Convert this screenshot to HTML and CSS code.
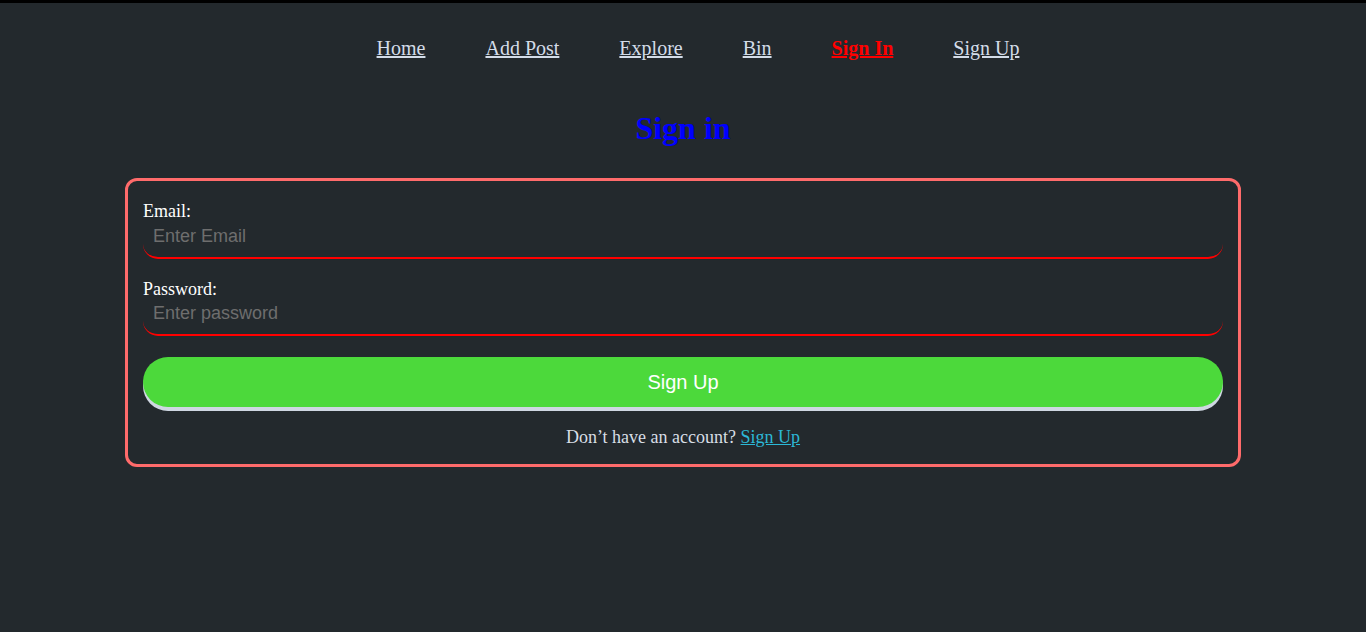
FILE: index.html
```html
<!DOCTYPE html>
<html lang="en">
<head>
<meta charset="utf-8">
<title>Sign in</title>
<link rel="stylesheet" href="styles.css">
</head>
<body>
<div class="topbar"></div>
<nav class="nav">
  <a href="#" class="nav-link">Home</a>
  <a href="#" class="nav-link">Add Post</a>
  <a href="#" class="nav-link">Explore</a>
  <a href="#" class="nav-link">Bin</a>
  <a href="#" class="nav-link active">Sign In</a>
  <a href="#" class="nav-link">Sign Up</a>
</nav>
<h1 class="title">Sign in</h1>
<form class="card">
  <label class="label" for="email">Email:</label>
  <input class="field" id="email" type="email" placeholder="Enter Email">
  <label class="label" for="password">Password:</label>
  <input class="field" id="password" type="password" placeholder="Enter password">
  <button type="button" class="btn">Sign Up</button>
  <p class="footer">Don’t have an account? <a href="#" class="footer-link">Sign Up</a></p>
</form>
</body>
</html>
```
FILE: styles.css
```css
* { box-sizing: border-box; }
html, body {
  margin: 0;
  padding: 0;
  background: #23292d;
  font-family: "Liberation Serif", "Times New Roman", serif;
  min-height: 632px;
}
.topbar {
  height: 3px;
  background: #000;
}
.nav {
  display: flex;
  justify-content: center;
  gap: 60px;
  margin-top: 34px;
  padding-left: 30px;
  font-size: 20px;
  line-height: 23px;
}
.nav-link {
  color: #d3dce8;
  text-decoration: underline;
}
.nav-link.active {
  color: #ff0000;
  font-weight: bold;
}
.title {
  margin: 50px 0 31px;
  text-align: center;
  color: #0000ff;
  font-size: 32px;
  line-height: 37px;
  font-weight: bold;
}
.card {
  width: 1116px;
  margin: 0 auto;
  border: 3px solid #ff6b6b;
  border-radius: 12px;
  padding: 20px 15px 16px;
  display: flex;
  flex-direction: column;
}
.label {
  color: #ffffff;
  font-size: 18px;
  line-height: 20.7px;
}
.field {
  height: 37px;
  width: 100%;
  background: transparent;
  border: none;
  border-bottom: 2px solid #ff0000;
  border-radius: 15px;
  padding: 4px 10px 10px;
  font-family: "Liberation Sans", Arial, sans-serif;
  font-size: 18px;
  color: #ddd;
  outline: none;
  margin-bottom: 20px;
}
.field::placeholder { color: #6e6e6e; }
.btn {
  margin-top: 1px;
  height: 50px;
  width: 100%;
  border: none;
  border-radius: 25px;
  background: #4cd93b;
  box-shadow: 0 4px 0 #cfd7e2;
  color: #ffffff;
  font-family: "Liberation Sans", Arial, sans-serif;
  font-size: 20px;
}
.footer {
  margin: 20px 0 0;
  text-align: center;
  color: #d8dee6;
  font-size: 18px;
  line-height: 20.7px;
}
.footer-link {
  color: #2cb8d6;
  text-decoration: underline;
}
```
